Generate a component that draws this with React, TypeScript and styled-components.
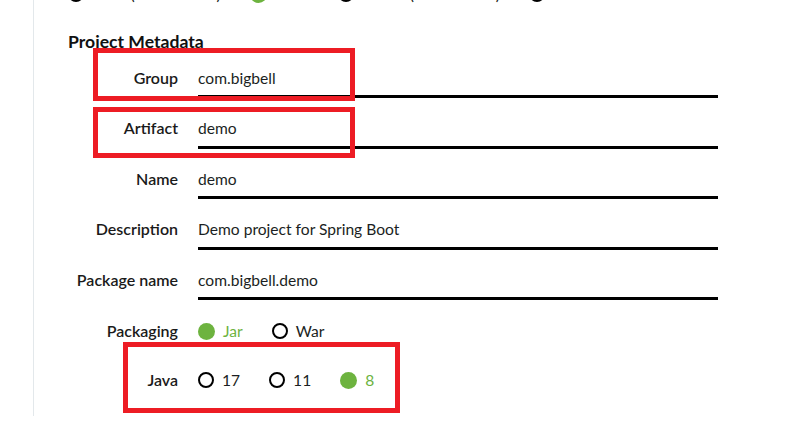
import React from "react";
import styled, { createGlobalStyle } from "styled-components";

const GlobalStyle = createGlobalStyle`
  html, body { margin: 0; padding: 0; background: #ffffff; }
  body {
    font-family: Lato, "Open Sans", Arial, sans-serif;
    color: #1b1f23;
    -webkit-font-smoothing: antialiased;
  }
`;

const Root = styled.div`
  position: relative;
  width: 789px;
  height: 442px;
  overflow: hidden;
`;

const Column = styled.div`
  margin-left: 33px;
  border-left: 1px solid #e3e8eb;
  padding-left: 34px;
  height: 416px;
  box-sizing: border-box;
  display: flex;
  flex-direction: column;
`;

const TopClip = styled.div`
  height: 3px;
  overflow: hidden;
  display: flex;
  align-items: flex-end;
  margin-bottom: 1px;
`;

const RadioList = styled.div`
  display: flex;
  align-items: center;
  column-gap: 29px;
  height: 18px;
  flex-shrink: 0;
`;

const RadioItem = styled.span<{ $on?: boolean }>`
  display: inline-flex;
  align-items: center;
  gap: 8px;
  font-size: 15.6px;
  color: ${(p) => (p.$on ? "#6db33f" : "#1b1f23")};
  white-space: nowrap;
`;

const Dot = styled.span<{ $on?: boolean }>`
  display: inline-block;
  box-sizing: border-box;
  width: ${(p) => (p.$on ? 17 : 16)}px;
  height: ${(p) => (p.$on ? 17 : 16)}px;
  border-radius: 50%;
  background: ${(p) => (p.$on ? "#6db33f" : "transparent")};
  border: ${(p) => (p.$on ? "none" : "2px solid #000")};
`;

const Heading = styled.h2`
  margin: 28px 0 0 0;
  font-size: 17.6px;
  line-height: 20px;
  font-weight: 700;
  color: #111;
`;

const Fields = styled.div`
  display: flex;
  flex-direction: column;
  row-gap: 12.6px;
  margin-top: 8px;
`;

const FieldRow = styled.label`
  display: grid;
  grid-template-columns: 110px 520px;
  column-gap: 20px;
  align-items: center;
`;

const Label = styled.span`
  text-align: right;
  font-size: 16px;
  font-weight: 600;
  color: #1a1a1a;
  padding-bottom: 4px;
  white-space: nowrap;
`;

const TextInput = styled.input`
  box-sizing: border-box;
  height: 38px;
  width: 520px;
  margin: 0;
  padding: 0;
  border: none;
  border-bottom: 3px solid #000;
  outline: none;
  background: transparent;
  font-family: Lato, "Open Sans", Arial, sans-serif;
  font-size: 15.6px;
  color: #1b1f23;
`;

const OptionRow = styled.div<{ $top: number }>`
  display: grid;
  grid-template-columns: 110px auto;
  column-gap: 20px;
  align-items: center;
  height: 20px;
  margin-top: ${(p) => p.$top}px;
`;

const OptionLabel = styled.span`
  text-align: right;
  font-size: 16px;
  font-weight: 600;
  color: #1a1a1a;
  white-space: nowrap;
  padding-bottom: 1px;
`;

const Highlight = styled.div<{ $x: number; $y: number; $w: number; $h: number }>`
  position: absolute;
  left: ${(p) => p.$x}px;
  top: ${(p) => p.$y}px;
  width: ${(p) => p.$w}px;
  height: ${(p) => p.$h}px;
  box-sizing: border-box;
  border: 5px solid #ed1c24;
  pointer-events: none;
`;

const fields = [
  { label: "Group", value: "com.bigbell" },
  { label: "Artifact", value: "demo" },
  { label: "Name", value: "demo" },
  { label: "Description", value: "Demo project for Spring Boot" },
  { label: "Package name", value: "com.bigbell.demo" },
];

const bootVersions = [
  { v: "2.7.4 (SNAPSHOT)", on: false },
  { v: "2.7.3", on: true },
  { v: "2.6.12 (SNAPSHOT)", on: false },
  { v: "2.6.11", on: false },
];

type Opt = { v: string; on: boolean };

const Radios = ({ options }: { options: Opt[] }) => (
  <RadioList>
    {options.map((o) => (
      <RadioItem key={o.v} $on={o.on}>
        <Dot $on={o.on} />
        {o.v}
      </RadioItem>
    ))}
  </RadioList>
);

export default function App() {
  return (
    <>
      <GlobalStyle />
      <Root>
        <Column>
          <TopClip>
            <Radios options={bootVersions} />
          </TopClip>
          <Heading>Project Metadata</Heading>
          <Fields>
            {fields.map((f) => (
              <FieldRow key={f.label}>
                <Label>{f.label}</Label>
                <TextInput readOnly defaultValue={f.value} />
              </FieldRow>
            ))}
          </Fields>
          <OptionRow $top={21}>
            <OptionLabel>Packaging</OptionLabel>
            <Radios
              options={[
                { v: "Jar", on: true },
                { v: "War", on: false },
              ]}
            />
          </OptionRow>
          <OptionRow $top={29}>
            <OptionLabel>Java</OptionLabel>
            <Radios
              options={[
                { v: "17", on: false },
                { v: "11", on: false },
                { v: "8", on: true },
              ]}
            />
          </OptionRow>
        </Column>
        <Highlight $x={93} $y={48} $w={262} $h={53} />
        <Highlight $x={93} $y={107} $w={262} $h={51} />
        <Highlight $x={123} $y={342} $w={277} $h={71} />
      </Root>
    </>
  );
}
